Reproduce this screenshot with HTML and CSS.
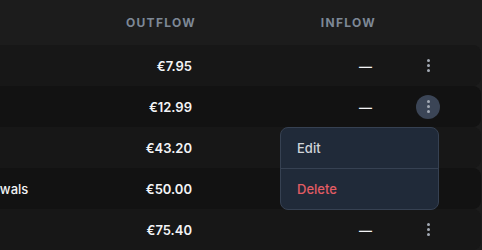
FILE: index.html
```html
<!DOCTYPE html>
<html lang="en">
<head>
    <meta charset="UTF-8">
    <meta name="viewport" content="width=device-width, initial-scale=1.0">
    <title>Budget - Transactions</title>
    <link rel="stylesheet" href="styles.css">
</head>
<body>
    <section class="ledger">
        <div class="ledger-head">
            <div class="col-name">Payee</div>
            <div class="col-num">Outflow</div>
            <div class="col-num">Inflow</div>
            <div></div>
        </div>

        <div class="ledger-row">
            <div class="col-name">Coffee</div>
            <div class="col-num">€7.95</div>
            <div class="col-num">—</div>
            <div class="col-actions"><button class="kebab" aria-label="More"><span></span><span></span><span></span></button></div>
        </div>
        <div class="ledger-row dark">
            <div class="col-name">Netflix</div>
            <div class="col-num">€12.99</div>
            <div class="col-num">—</div>
            <div class="col-actions">
                <div class="menu-wrap">
                    <button class="kebab open" aria-label="More"><span></span><span></span><span></span></button>
                    <div class="menu">
                        <a href="#" class="menu-item">Edit</a>
                        <a href="#" class="menu-item danger">Delete</a>
                    </div>
                </div>
            </div>
        </div>
        <div class="ledger-row">
            <div class="col-name">Groceries</div>
            <div class="col-num">€43.20</div>
            <div class="col-num">—</div>
            <div class="col-actions"><button class="kebab" aria-label="More"><span></span><span></span><span></span></button></div>
        </div>
        <div class="ledger-row dark">
            <div class="col-name">ATM Withdrawals</div>
            <div class="col-num">€50.00</div>
            <div class="col-num">—</div>
            <div class="col-actions"><button class="kebab" aria-label="More"><span></span><span></span><span></span></button></div>
        </div>
        <div class="ledger-row">
            <div class="col-name">Fuel</div>
            <div class="col-num">€75.40</div>
            <div class="col-num">—</div>
            <div class="col-actions"><button class="kebab" aria-label="More"><span></span><span></span><span></span></button></div>
        </div>
    </section>
</body>
</html>
```

FILE: styles.css
```css
/* Base */
body {
    margin: 0;
    background: #1c1c1c;
    color: #f3f4f6;
    font-family: Inter, "Noto Sans", sans-serif;
    font-size: 13px;
    overflow: hidden;
}

/* Ledger table */
.ledger {
    margin: 0 1px 0 -97px;
}

.ledger-head,
.ledger-row {
    display: grid;
    grid-template-columns: 1fr 120px 180px 56px;
    align-items: center;
    padding-right: 25px;
}

.ledger-head {
    height: 45px;
    color: #7d8896;
    font-size: 12px;
    font-weight: 700;
    letter-spacing: 1.3px;
    text-transform: uppercase;
}

.ledger-head .col-num {
    padding-right: 24px;
}

.ledger-row {
    height: 41px;
    background: #171717;
    border-radius: 0 8px 8px 0;
    font-weight: 600;
}

.ledger-row.dark {
    background: #121212;
}

.col-name {
    padding-left: 16px;
    font-weight: 500;
}

.col-num {
    text-align: right;
    padding-right: 28px;
}

.col-actions {
    display: flex;
    justify-content: center;
}

/* Row menu */
.kebab {
    width: 24px;
    height: 24px;
    border: none;
    border-radius: 50%;
    background: transparent;
    display: flex;
    flex-direction: column;
    align-items: center;
    justify-content: center;
    gap: 2px;
    padding: 0;
    cursor: pointer;
}

.kebab span {
    width: 3px;
    height: 3px;
    border-radius: 50%;
    background: #a3aab4;
}

.kebab.open {
    background: #3b4556;
}

.menu-wrap {
    position: relative;
}

.menu {
    position: absolute;
    top: calc(100% + 8px);
    right: 1px;
    width: 157px;
    background: #202a39;
    border: 1px solid #364152;
    border-radius: 8px;
    z-index: 10;
}

.menu-item {
    display: block;
    height: 40px;
    line-height: 40px;
    padding-left: 16px;
    color: #d1d5db;
    text-decoration: none;
    font-weight: 500;
}

.menu-item + .menu-item {
    border-top: 1px solid #364152;
}

.menu-item.danger {
    color: #e25c64;
}
```
